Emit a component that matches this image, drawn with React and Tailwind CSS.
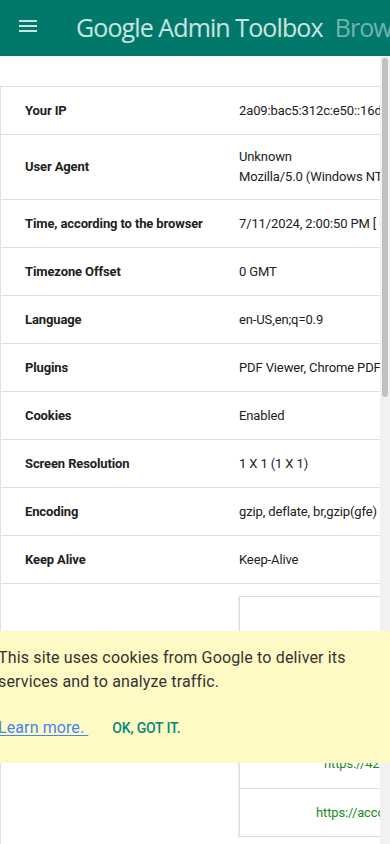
import React from 'react';

const rows = [
  { label: 'Your IP', value: ['2a09:bac5:312c:e50::16d:2f'] },
  { label: 'User Agent', value: ['Unknown', 'Mozilla/5.0 (Windows NT 10.0; Win64; x64) AppleWebKit/537.36'] },
  { label: 'Time, according to the browser', value: ['7/11/2024, 2:00:50 PM [ Coordinated Universal Time ]'] },
  { label: 'Timezone Offset', value: ['0 GMT'] },
  { label: 'Language', value: ['en-US,en;q=0.9'] },
  { label: 'Plugins', value: ['PDF Viewer, Chrome PDF Viewer, Chromium PDF Viewer'] },
  { label: 'Cookies', value: ['Enabled'] },
  { label: 'Screen Resolution', value: ['1 X 1 (1 X 1)'] },
  { label: 'Encoding', value: ['gzip, deflate, br,gzip(gfe)'] },
  { label: 'Keep Alive', value: ['Keep-Alive'] },
];

const MenuIcon = () => (
  <svg width="24" height="24" viewBox="0 0 24 24" className="shrink-0 fill-white/80">
    <rect x="3" y="6" width="18" height="2" />
    <rect x="3" y="11" width="18" height="2" />
    <rect x="3" y="16" width="18" height="2" />
  </svg>
);

const App = () => {
  return (
    <div className="relative w-[390px] h-[844px] overflow-hidden bg-white font-['Roboto',sans-serif]">
      <header className="h-14 bg-[#00796b] flex items-center pl-4 overflow-hidden whitespace-nowrap">
        <div className="mb-1">
          <MenuIcon />
        </div>
        <span className="ml-[36px] text-[25px] text-white/80 font-['Open_Sans',sans-serif] tracking-[-0.9px]">
          Google Admin Toolbox
        </span>
        <span className="ml-3 text-[25px] text-white/45 font-['Open_Sans',sans-serif] tracking-[-0.9px]">
          Browser info
        </span>
      </header>

      <div className="flex h-[788px]">
        <main className="flex-1 overflow-hidden pt-[30px]">
          <div className="w-[700px] border-t border-l border-[#e0e0e0] text-[13px] text-[#212121] tracking-[-0.12px]">
            {rows.map(row => (
              <div key={row.label} className="flex items-center min-h-[48px] py-3 border-b border-[#e0e0e0]">
                <div className="w-[238px] shrink-0 pl-6 font-bold leading-5">{row.label}</div>
                <div className="whitespace-nowrap leading-5">
                  {row.value.map(line => (
                    <div key={line}>{line}</div>
                  ))}
                </div>
              </div>
            ))}
            <div className="flex h-[300px]">
              <div className="w-[238px] shrink-0" />
              <div className="pt-3 flex-1">
                <div className="border-t border-l border-[#dcdcdc] shadow-[-1px_0_2px_rgba(0,0,0,0.08)] bg-white">
                  <div className="h-[143px]" />
                  <div className="h-[49px] flex items-center border-b border-[#e0e0e0] pl-[84px] text-[#198a19] whitespace-nowrap">
                    https://42.ipv6.example.google.com/
                  </div>
                  <div className="h-[48px] flex items-center border-b border-[#e0e0e0] pl-[76px] text-[#198a19] whitespace-nowrap">
                    https://accounts.google.com/
                  </div>
                </div>
              </div>
            </div>
          </div>
        </main>
        <div className="w-[10px] shrink-0 bg-[#f1f1f1] pt-[2px] pl-[2px]">
          <div className="w-[6px] h-[339px] rounded-full bg-[#c1c1c1]" />
        </div>
      </div>

      <div className="absolute left-0 top-[631px] w-full h-[132px] bg-[#fff9c4] pt-[15px] overflow-hidden">
        <div className="-ml-[2px] whitespace-nowrap">
          <p className="text-[16px] leading-6 text-[#333] tracking-[0.15px]">
            This site uses cookies from Google to deliver its
            <br />
            services and to analyze traffic.
          </p>
          <div className="mt-[24px] flex items-center">
            <a href="#" className="text-[16px] leading-5 text-[#4285f4] underline underline-offset-2 tracking-[0.1px]">
              Learn more.&nbsp;
            </a>
            <button className="ml-[24px] text-[14px] leading-5 font-medium uppercase text-[#00897b] tracking-[-0.2px]">
              Ok, got it.
            </button>
          </div>
        </div>
      </div>
    </div>
  );
};

export default App;
